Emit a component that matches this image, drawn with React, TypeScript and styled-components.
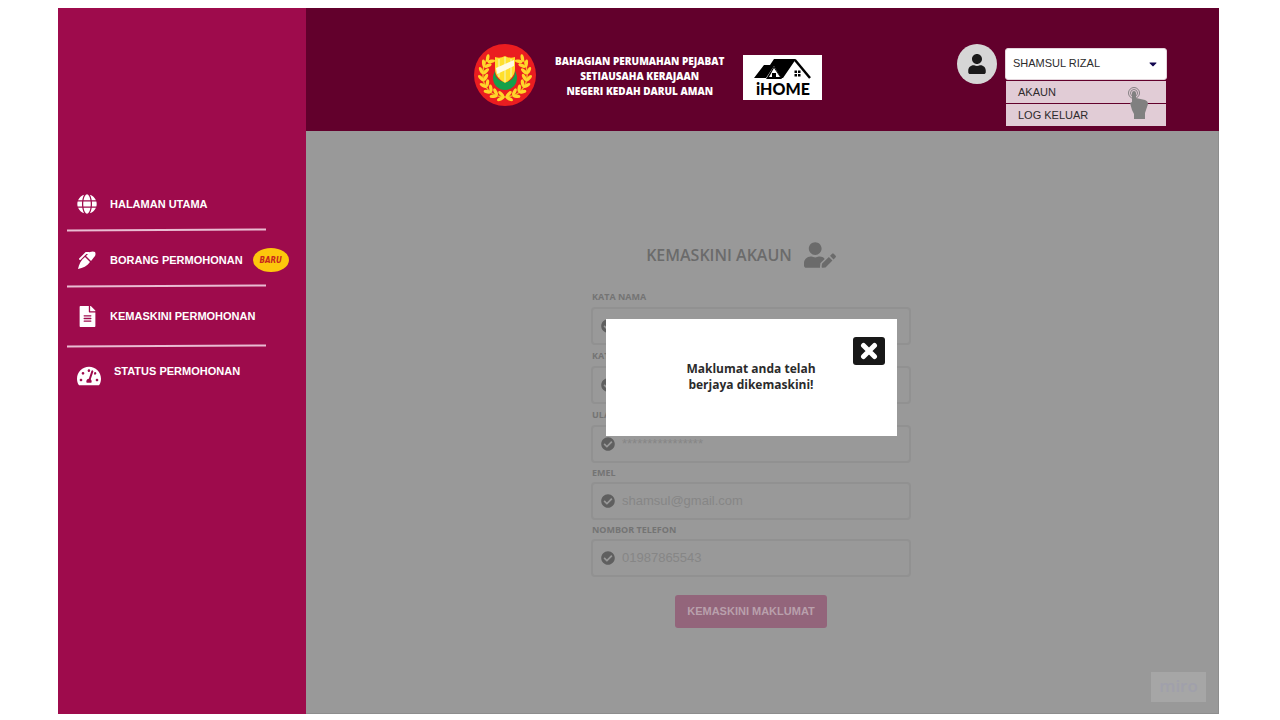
import React from "react";
import styled, { createGlobalStyle } from "styled-components";
import {
  FaGlobe,
  FaFileAlt,
  FaTachometerAlt,
  FaUser,
  FaUserEdit,
  FaCheckCircle,
  FaCaretDown,
} from "react-icons/fa";

const sans = `"Liberation Sans", Arial, sans-serif`;
const open = `"Open Sans", "Noto Sans", sans-serif`;

const GlobalStyle = createGlobalStyle`
  *, *::before, *::after { box-sizing: border-box; }
  body { margin: 0; background: #ffffff; font-family: ${sans}; }
  a { color: inherit; text-decoration: none; }
  button, input, select { font-family: inherit; }
`;

const Page = styled.div`
  display: grid;
  grid-template-columns: 248px minmax(0, 1fr);
  min-height: calc(100vh - 14px);
  margin: 8px 61px 6px 58px;
`;

const Sidebar = styled.aside`
  padding: 167px 18px 24px 9px;
  background: #9e0b4c;
`;

const NavList = styled.ul`
  margin: 0;
  padding: 0;
  list-style: none;
`;

const NavItem = styled.li`
  padding-top: 18px;
`;

const Divider = styled.span<{ $roomy?: boolean }>`
  display: block;
  width: 199px;
  height: 2px;
  margin-top: ${(p) => (p.$roomy ? 18 : 14)}px;
  background: #e9bdd2;
  transform: rotate(-0.3deg);
`;

const NavLink = styled.a<{ $raised?: boolean }>`
  display: flex;
  align-items: ${(p) => (p.$raised ? "flex-start" : "center")};
  gap: ${(p) => (p.$raised ? 12 : 10)}px;
  height: 22px;
  padding-left: ${(p) => (p.$raised ? 9 : 7)}px;
  color: #ffffff;
  font-size: 11px;
  line-height: 12px;
  font-weight: 700;
  white-space: nowrap;
`;

const NavIcon = styled.span`
  display: flex;
  flex: none;
  align-items: center;
  justify-content: center;
  width: 26px;
  height: 22px;
`;

const NewBadge = styled.span`
  display: flex;
  flex: none;
  align-items: center;
  justify-content: center;
  width: 36px;
  height: 24px;
  border-radius: 50%;
  background: #fdc70c;
  color: #c8281e;
  font: italic 700 8px "Liberation Sans Narrow", "DejaVu Sans Condensed", sans-serif;
`;

const Content = styled.div`
  display: flex;
  flex-direction: column;
`;

const Header = styled.header`
  display: flex;
  justify-content: space-between;
  align-items: flex-start;
  height: 123px;
  padding: 36px 52px 0 168px;
  background: #62002c;
`;

const Brand = styled.div`
  display: flex;
  align-items: center;
  gap: 19px;
`;

const BrandName = styled.p`
  margin: 3px 0 0;
  color: #ffffff;
  font: 800 10px/15px ${open};
  text-align: center;
  white-space: nowrap;
`;

const HomeLogo = styled.div`
  display: flex;
  flex-direction: column;
  align-items: center;
  width: 79px;
  height: 45px;
  margin-top: 4px;
  padding-top: 4px;
  background: #ffffff;
  color: #000000;
  font: 900 16px/20px Lato, sans-serif;
`;

const Account = styled.div`
  display: flex;
  gap: 8px;
`;

const Avatar = styled.span`
  display: flex;
  align-items: center;
  justify-content: center;
  width: 40px;
  height: 40px;
  border-radius: 50%;
  background: #d6d6d6;
  color: #1a1a1a;
`;

const AccountMenu = styled.div`
  position: relative;
  width: 162px;
  padding-top: 4px;
`;

const AccountSelect = styled.select`
  appearance: none;
  display: block;
  width: 100%;
  height: 32px;
  padding: 0 7px 2px;
  border: 1px solid #e4d5dc;
  border-radius: 3px;
  background: #ffffff;
  color: #2b2b2b;
  font-size: 11px;
`;

const Caret = styled(FaCaretDown)`
  position: absolute;
  top: 14px;
  right: 8px;
  color: #12064f;
  pointer-events: none;
`;

const MenuList = styled.div`
  display: grid;
  gap: 1px;
  padding: 1px 1px 0;
`;

const MenuLink = styled.a`
  padding: 0 12px;
  background: #e1ccd6;
  color: #2e2a2c;
  font-size: 11px;
  line-height: 22px;
`;

const Pointer = styled.svg`
  position: absolute;
  top: 42px;
  right: 17px;
  pointer-events: none;
`;

const Main = styled.main`
  position: relative;
  display: flex;
  flex: 1;
  flex-direction: column;
  align-items: center;
  padding: 108px 22px 24px 0;
  border: solid #8d8d8d;
  border-width: 0 1px 1px 0;
  background: #999999;
`;

const Title = styled.h1`
  display: flex;
  align-items: center;
  gap: 12px;
  height: 32px;
  margin: 0 0 15px;
  padding-right: 20px;
  color: #6b6b6b;
  font: 600 16px/24px ${open};
  white-space: nowrap;
`;

const Form = styled.form`
  display: flex;
  flex-direction: column;
  width: 320px;
`;

const Label = styled.label<{ $compact?: boolean }>`
  padding-left: 1px;
  color: #747474;
  font: 700 9px/${(p) => (p.$compact ? 19 : 21)}px ${open};
`;

const Field = styled.div`
  display: flex;
  align-items: center;
  gap: 7px;
  height: 38px;
  padding: 0 8px;
  border: 2px solid #919191;
  border-radius: 4px;
  color: #5f5f5f;
`;

const Input = styled.input`
  flex: 1;
  min-width: 0;
  padding: 0 0 2px;
  border: 0;
  outline: 0;
  background: transparent;
  color: #868686;
  font-size: 13px;
`;

const Submit = styled.button`
  align-self: center;
  width: 152px;
  height: 33px;
  margin-top: 18px;
  padding: 0 0 2px;
  border: 0;
  border-radius: 3px;
  background: #93657b;
  color: #b9a0ac;
  font-size: 11px;
  font-weight: 700;
  white-space: nowrap;
`;

const Dialog = styled.div`
  position: absolute;
  top: 188px;
  left: 0;
  right: 22px;
  display: flex;
  align-items: center;
  justify-content: center;
  width: 291px;
  height: 117px;
  margin: 0 auto;
  padding-bottom: 2px;
  background: #ffffff;
`;

const Message = styled.p`
  margin: 0;
  color: #2b2b2b;
  font: 700 12px/16px ${open};
  text-align: center;
`;

const CloseButton = styled.button`
  position: absolute;
  top: 18px;
  right: 12px;
  display: flex;
  align-items: center;
  justify-content: center;
  width: 32px;
  height: 28px;
  padding: 0;
  border: 0;
  border-radius: 3px;
  background: #181818;
  color: #ffffff;
`;

const Watermark = styled.span`
  position: absolute;
  right: 12px;
  bottom: 11px;
  width: 55px;
  height: 30px;
  background: #a6a6a6;
  color: #a0a0ab;
  font: 600 17px/28px ${open};
  text-align: center;
`;

const leafAngles = [16, 34, 52, 70, 88, 106, 124, 140];

function Crest() {
  return (
    <svg width="62" height="62" viewBox="0 0 62 62" role="img" aria-label="Kedah">
      <circle cx="31" cy="31" r="31" fill="#ea1d20" />
      {[1, -1].map((side) => (
        <g key={side} transform={side === 1 ? undefined : "matrix(-1 0 0 1 62 0)"}>
          <path d="M30 53C46 53 54 42 53 29C53 23 51 18 48 14" fill="none" stroke="#f3b81e" strokeWidth="1.400" />
          {leafAngles.map((a) => (
            <g key={a} transform={`rotate(${-a + 8} 31 31) translate(31 53)`}>
              <ellipse cx="1" cy="-2.600" rx="3.900" ry="1.700" fill="#ffd62b" transform="rotate(-38 1 -2.600)" />
              <ellipse cx="1" cy="2.200" rx="3.900" ry="1.700" fill="#ffd62b" transform="rotate(32 1 2.200)" />
            </g>
          ))}
        </g>
      ))}
      <circle cx="31" cy="34" r="12" fill="#14a04a" />
      <circle cx="31" cy="28" r="10" fill="#ea1d20" />
      <path d="M21 13Q26 15 31 12Q36 15 41 13V25C41 32 36 36 31 39C26 36 21 32 21 25Z" fill="#ffdf2c" />
      <path d="M25 15V33M31 13V38M37 15V33" stroke="#f6ef9a" strokeWidth="1.400" />
      <path d="M22 24L40 16V22L23 30Z" fill="#fffbe0" />
    </svg>
  );
}

function Roof() {
  return (
    <svg width="58" height="20" viewBox="0 0 58 20" aria-hidden="true">
      <path d="M0 19L10 6H16L20 0H42L29 19H27L20 7L12 19Z" fill="#000" />
      <path d="M12 20L20 7L28 20Z" fill="#000" />
      <path d="M15 18L20 9L26 18Z" fill="#fff" />
      <path d="M18 14H22V18H18Z" fill="#000" />
      <path d="M41 1L56 19" fill="none" stroke="#000" strokeWidth="2.500" />
      <path d="M40.500 11.500H43V14H40.500ZM44 11.500H46.500V14H44ZM40.500 15H43V17.500H40.500ZM44 15H46.500V17.500H44Z" fill="#000" />
    </svg>
  );
}

function PenIcon() {
  return (
    <svg width="18" height="18" viewBox="0 0 18 18" fill="currentColor" aria-hidden="true">
      <path d="M0 18C1 13 3 9 7 6L12 11C9 15 5 17 0 18Z" />
      <path d="M8 5L12 1Q15 0 17 1Q18 3 17 5L13 10Z" />
      <path d="M2 8L8 2H11" fill="none" stroke="currentColor" strokeWidth="1.800" strokeLinecap="round" />
    </svg>
  );
}

function CrossIcon() {
  return (
    <svg width="18" height="18" viewBox="0 0 18 18" aria-hidden="true">
      <path d="M3.500 3.500L14.500 14.500M14.500 3.500L3.500 14.500" stroke="currentColor" strokeWidth="5" strokeLinecap="round" />
    </svg>
  );
}

function TapPointer() {
  return (
    <Pointer width="22" height="34" viewBox="0 0 22 34" aria-hidden="true">
      <g fill="none" stroke="#858083">
        <circle cx="6" cy="7" r="5.500" />
        <circle cx="6" cy="7" r="3.500" />
      </g>
      <path
        d="M4 7Q4 5 6 5Q8 5 8 7V12L17 14Q20 15 20 18L17 27V33H6V28L4 24L2 17L4 16Z"
        fill="#808080"
      />
    </Pointer>
  );
}

const fields = [
  { id: "nama", label: "KATA NAMA", value: "", compact: false },
  { id: "laluan", label: "KATA LALUAN", value: "", compact: false },
  { id: "ulang", label: "ULANG KATA LALUAN", value: "****************", compact: false },
  { id: "emel", label: "EMEL", value: "shamsul@gmail.com", compact: true },
  { id: "telefon", label: "NOMBOR TELEFON", value: "01987865543", compact: true },
];

export default function App() {
  return (
    <>
      <GlobalStyle />
      <Page>
        <Sidebar>
          <nav>
            <NavList>
              <NavItem>
                <NavLink href="#utama">
                  <NavIcon><FaGlobe size={20} /></NavIcon>
                  HALAMAN UTAMA
                </NavLink>
                <Divider />
              </NavItem>
              <NavItem>
                <NavLink href="#borang">
                  <NavIcon><PenIcon /></NavIcon>
                  BORANG PERMOHONAN
                  <NewBadge>BARU</NewBadge>
                </NavLink>
                <Divider />
              </NavItem>
              <NavItem>
                <NavLink href="#kemaskini">
                  <NavIcon><FaFileAlt size={21} /></NavIcon>
                  KEMASKINI PERMOHONAN
                </NavLink>
                <Divider $roomy />
              </NavItem>
              <NavItem>
                <NavLink href="#status" $raised>
                  <NavIcon><FaTachometerAlt size={24} /></NavIcon>
                  STATUS PERMOHONAN
                </NavLink>
              </NavItem>
            </NavList>
          </nav>
        </Sidebar>
        <Content>
          <Header>
            <Brand>
              <Crest />
              <BrandName>
                BAHAGIAN PERUMAHAN PEJABAT
                <br />
                SETIAUSAHA KERAJAAN
                <br />
                NEGERI KEDAH DARUL AMAN
              </BrandName>
              <HomeLogo>
                <Roof />
                iHOME
              </HomeLogo>
            </Brand>
            <Account>
              <Avatar><FaUser size={20} /></Avatar>
              <AccountMenu>
                <AccountSelect aria-label="Akaun pengguna">
                  <option>SHAMSUL RIZAL</option>
                </AccountSelect>
                <Caret size={12} />
                <MenuList>
                  <MenuLink href="#akaun">AKAUN</MenuLink>
                  <MenuLink href="#keluar">LOG KELUAR</MenuLink>
                </MenuList>
                <TapPointer />
              </AccountMenu>
            </Account>
          </Header>
          <Main>
            <Title>
              KEMASKINI AKAUN
              <FaUserEdit size={32} />
            </Title>
            <Form>
              {fields.map((f) => (
                <React.Fragment key={f.id}>
                  <Label htmlFor={f.id} $compact={f.compact}>{f.label}</Label>
                  <Field>
                    <FaCheckCircle size={14} />
                    <Input id={f.id} defaultValue={f.value} />
                  </Field>
                </React.Fragment>
              ))}
              <Submit type="button">KEMASKINI MAKLUMAT</Submit>
            </Form>
            <Dialog role="dialog" aria-label="Makluman">
              <Message>
                Maklumat anda telah
                <br />
                berjaya dikemaskini!
              </Message>
              <CloseButton aria-label="Tutup"><CrossIcon /></CloseButton>
            </Dialog>
            <Watermark>miro</Watermark>
          </Main>
        </Content>
      </Page>
    </>
  );
}
